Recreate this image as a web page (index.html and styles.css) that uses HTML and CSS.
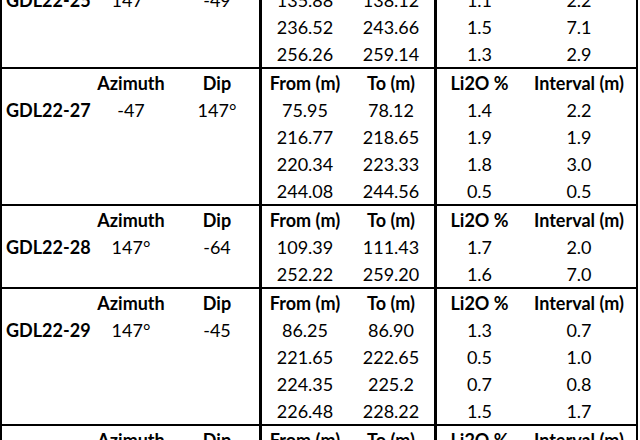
FILE: index.html
```html
<!DOCTYPE html>
<html>
<head>
<meta charset="utf-8">
<link rel="stylesheet" href="styles.css">
</head>
<body>
<div class="sheet">
  <div class="group">
    <div class="row"><div class="id">GDL22-25</div><div class="c">147°</div><div class="c sep">-49</div><div class="c">135.88</div><div class="c sep">138.12</div><div class="c">1.1</div><div class="c">2.2</div></div>
    <div class="row"><div class="id"></div><div class="c"></div><div class="c sep"></div><div class="c">236.52</div><div class="c sep">243.66</div><div class="c">1.5</div><div class="c">7.1</div></div>
    <div class="row"><div class="id"></div><div class="c"></div><div class="c sep"></div><div class="c">256.26</div><div class="c sep">259.14</div><div class="c">1.3</div><div class="c">2.9</div></div>
  </div>
  <div class="group">
    <div class="row head"><div class="id"></div><div class="c">Azimuth</div><div class="c sep">Dip</div><div class="c">From (m)</div><div class="c sep">To (m)</div><div class="c">Li2O %</div><div class="c">Interval (m)</div></div>
    <div class="row"><div class="id">GDL22-27</div><div class="c">-47</div><div class="c sep">147°</div><div class="c">75.95</div><div class="c sep">78.12</div><div class="c">1.4</div><div class="c">2.2</div></div>
    <div class="row"><div class="id"></div><div class="c"></div><div class="c sep"></div><div class="c">216.77</div><div class="c sep">218.65</div><div class="c">1.9</div><div class="c">1.9</div></div>
    <div class="row"><div class="id"></div><div class="c"></div><div class="c sep"></div><div class="c">220.34</div><div class="c sep">223.33</div><div class="c">1.8</div><div class="c">3.0</div></div>
    <div class="row"><div class="id"></div><div class="c"></div><div class="c sep"></div><div class="c">244.08</div><div class="c sep">244.56</div><div class="c">0.5</div><div class="c">0.5</div></div>
  </div>
  <div class="group">
    <div class="row head"><div class="id"></div><div class="c">Azimuth</div><div class="c sep">Dip</div><div class="c">From (m)</div><div class="c sep">To (m)</div><div class="c">Li2O %</div><div class="c">Interval (m)</div></div>
    <div class="row"><div class="id">GDL22-28</div><div class="c">147°</div><div class="c sep">-64</div><div class="c">109.39</div><div class="c sep">111.43</div><div class="c">1.7</div><div class="c">2.0</div></div>
    <div class="row"><div class="id"></div><div class="c"></div><div class="c sep"></div><div class="c">252.22</div><div class="c sep">259.20</div><div class="c">1.6</div><div class="c">7.0</div></div>
  </div>
  <div class="group">
    <div class="row head"><div class="id"></div><div class="c">Azimuth</div><div class="c sep">Dip</div><div class="c">From (m)</div><div class="c sep">To (m)</div><div class="c">Li2O %</div><div class="c">Interval (m)</div></div>
    <div class="row"><div class="id">GDL22-29</div><div class="c">147°</div><div class="c sep">-45</div><div class="c">86.25</div><div class="c sep">86.90</div><div class="c">1.3</div><div class="c">0.7</div></div>
    <div class="row"><div class="id"></div><div class="c"></div><div class="c sep"></div><div class="c">221.65</div><div class="c sep">222.65</div><div class="c">0.5</div><div class="c">1.0</div></div>
    <div class="row"><div class="id"></div><div class="c"></div><div class="c sep"></div><div class="c">224.35</div><div class="c sep">225.2</div><div class="c">0.7</div><div class="c">0.8</div></div>
    <div class="row"><div class="id"></div><div class="c"></div><div class="c sep"></div><div class="c">226.48</div><div class="c sep">228.22</div><div class="c">1.5</div><div class="c">1.7</div></div>
  </div>
  <div class="group">
    <div class="row head"><div class="id"></div><div class="c">Azimuth</div><div class="c sep">Dip</div><div class="c">From (m)</div><div class="c sep">To (m)</div><div class="c">Li2O %</div><div class="c">Interval (m)</div></div>
  </div>
</div>
</body>
</html>
```

FILE: styles.css
```css
html, body {
  margin: 0;
  padding: 0;
  background: #ffffff;
  overflow: hidden;
}

.sheet {
  width: 638px;
  margin-top: -16px;
  font-family: Lato, "Liberation Sans", sans-serif;
  font-size: 18px;
  color: #000000;
}

.group {
  border-top: 2px solid #000000;
}

.row {
  display: grid;
  grid-template-columns: 85px 88px 87px 86px 89px 85px 114px;
  height: 27px;
  line-height: 27px;
  border-left: 2px solid #000000;
  border-right: 2px solid #000000;
}

.row > div {
  box-sizing: border-box;
  white-space: nowrap;
  padding-top: 1px;
}

.id {
  font-weight: 700;
  padding-left: 4px;
}

.c {
  text-align: center;
}

.sep {
  border-right: 3px solid #000000;
}

.head .c {
  font-weight: 700;
}
```
